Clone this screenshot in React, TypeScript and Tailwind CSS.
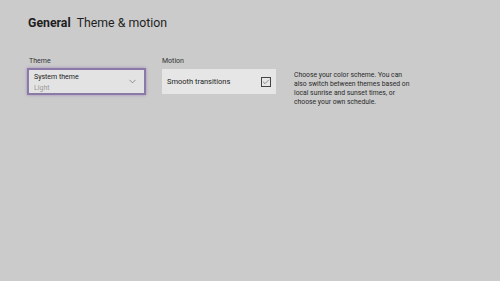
import { Check, ChevronDown } from "lucide-react";

export default function App() {
  return (
    <div
      className="w-[500px] h-[281px] bg-[#cbcbcb] text-[#1e1e1e] pl-[28px] pt-[15px]"
      style={{ fontFamily: "Roboto, 'Liberation Sans', sans-serif" }}
    >
      <h1 className="flex items-baseline gap-[6px] text-[12.3px] leading-[16px]">
        <span className="font-bold">General</span>
        <span>Theme &amp; motion</span>
      </h1>

      <div className="flex mt-[26px]">
        <div className="w-[119px] -ml-[1px]">
          <div className="text-[7px] leading-[9px] pl-[2px] text-[#333]">Theme</div>
          <button className="mt-[2px] w-[119px] h-[27px] bg-[#e3e3e3] border-2 border-[#8c7aa6] shadow-[0_0_3px_#a08cbb] flex items-center justify-between pl-[5px] pr-[6px] text-left">
            <div className="flex flex-col pt-[1px]">
              <span className="text-[7px] leading-[12px] text-[#222]">System theme</span>
              <span className="text-[7px] leading-[11px] text-[#9a9a9a]">Light</span>
            </div>
            <ChevronDown size={11} strokeWidth={1.3} className="text-[#555]" />
          </button>
        </div>

        <div className="w-[114px] ml-[16px]">
          <div className="text-[7px] leading-[9px] text-[#333]">Motion</div>
          <div className="mt-[3px] h-[25px] bg-[#e6e6e6] flex items-center justify-between pl-[5px] pr-[5px]">
            <span className="text-[7.5px] text-[#222]">Smooth transitions</span>
            <span className="w-[10px] h-[10px] border border-[#444] flex items-center justify-center">
              <Check size={8} strokeWidth={1.5} className="text-[#333]" />
            </span>
          </div>
        </div>

        <p className="ml-[18px] mt-[14px] whitespace-nowrap text-[6.8px] leading-[9px] text-[#2a2a2a]">
          Choose your color scheme. You can
          <br />
          also switch between themes based on
          <br />
          local sunrise and sunset times, or
          <br />
          choose your own schedule.
        </p>
      </div>
    </div>
  );
}
